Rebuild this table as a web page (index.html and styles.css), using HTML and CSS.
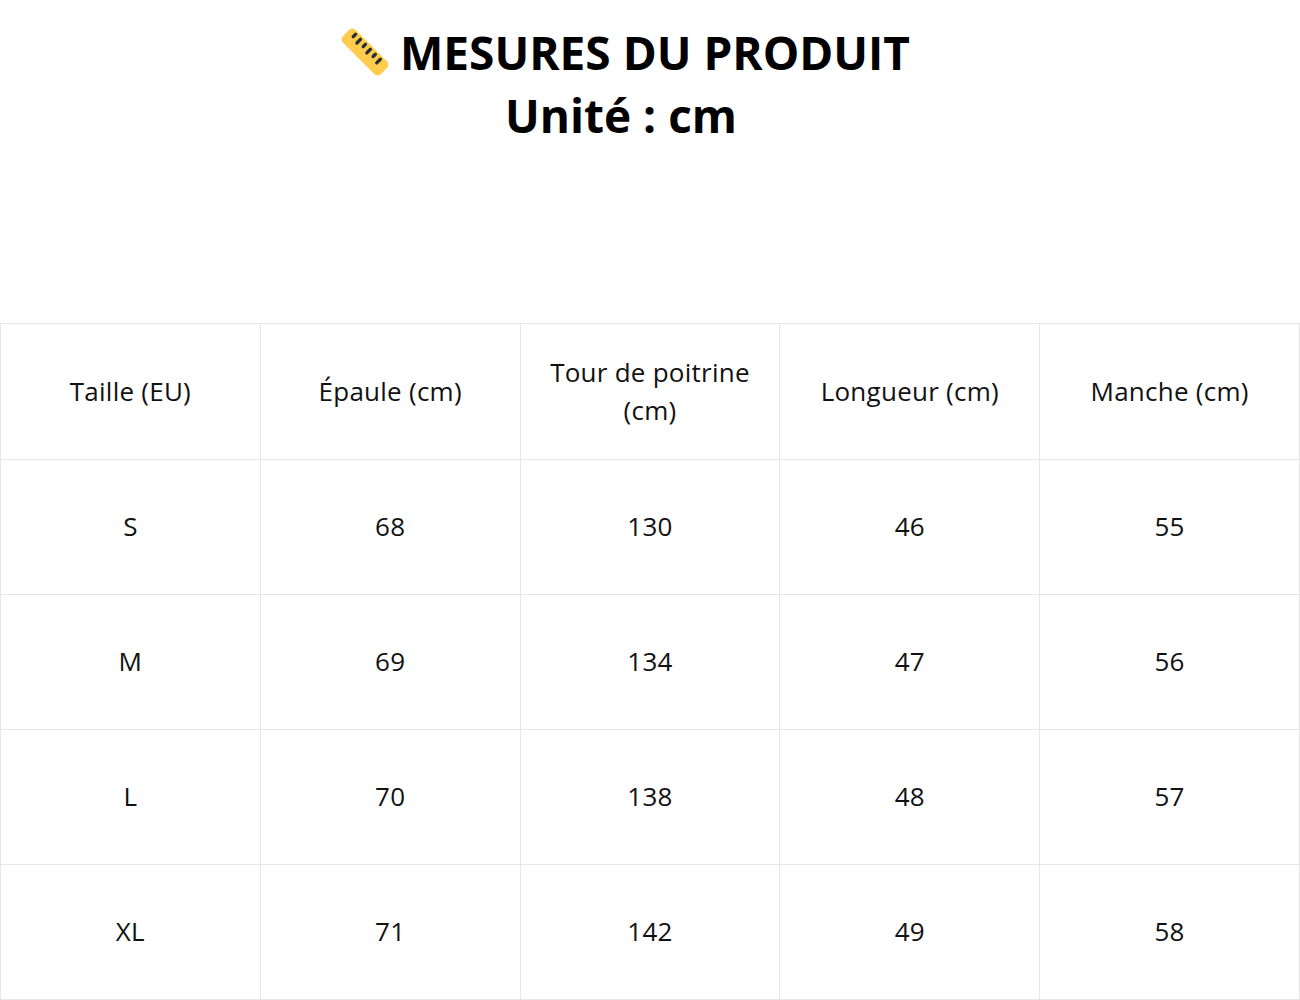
FILE: index.html
```html
<!DOCTYPE html>
<html lang="fr">
<head>
<meta charset="utf-8">
<title>Mesures du produit</title>
<link rel="stylesheet" href="styles.css">
</head>
<body>
<header class="heading">
  <h1 class="title"><svg class="ruler" viewBox="0 0 36 36" aria-hidden="true"><g transform="rotate(45 18 18)"><rect x="-3" y="11" width="42" height="14" rx="3.5" fill="#FFCC4D"/><g stroke="#292F33" stroke-width="2.6" stroke-linecap="round"><line x1="3" y1="13.5" x2="3" y2="16"/><line x1="8.5" y1="13.5" x2="8.5" y2="17.5"/><line x1="14" y1="13.5" x2="14" y2="16"/><line x1="19.5" y1="13.5" x2="19.5" y2="17.5"/><line x1="25" y1="13.5" x2="25" y2="16"/><line x1="30.5" y1="13.5" x2="30.5" y2="17.5"/></g></g></svg> MESURES DU PRODUIT<br>Unité : cm</h1>
</header>
<table class="sizes">
  <tr class="head-row">
    <td>Taille (EU)</td>
    <td>Épaule (cm)</td>
    <td>Tour de poitrine (cm)</td>
    <td>Longueur (cm)</td>
    <td>Manche (cm)</td>
  </tr>
  <tr><td>S</td><td>68</td><td>130</td><td>46</td><td>55</td></tr>
  <tr><td>M</td><td>69</td><td>134</td><td>47</td><td>56</td></tr>
  <tr><td>L</td><td>70</td><td>138</td><td>48</td><td>57</td></tr>
  <tr><td>XL</td><td>71</td><td>142</td><td>49</td><td>58</td></tr>
</table>
</body>
</html>
```
FILE: styles.css
```css
html, body {
  margin: 0;
  padding: 0;
  background: #ffffff;
}
body {
  font-family: "Open Sans", "Noto Sans", sans-serif;
  color: #111111;
}
.heading {
  padding: 21px 58px 0 0;
  height: 302px;
  box-sizing: border-box;
}
.title {
  margin: 0;
  font-size: 46px;
  line-height: 63px;
  font-weight: 700;
  text-align: center;
  color: #000000;
}
.ruler {
  width: 46px;
  height: 46px;
  margin-left: 10px;
  overflow: visible;
  vertical-align: -5px;
}
.sizes {
  width: 1300px;
  border-collapse: collapse;
  table-layout: fixed;
  margin-top: 21px;
}
.sizes td {
  border: 1px solid #e6e6e6;
  height: 132px;
  padding: 0 12px 2px;
  text-align: center;
  vertical-align: middle;
  font-size: 26px;
  line-height: 38px;
  letter-spacing: 0.25px;
  color: #111111;
}
.sizes .head-row td {
  height: 133px;
}
```
